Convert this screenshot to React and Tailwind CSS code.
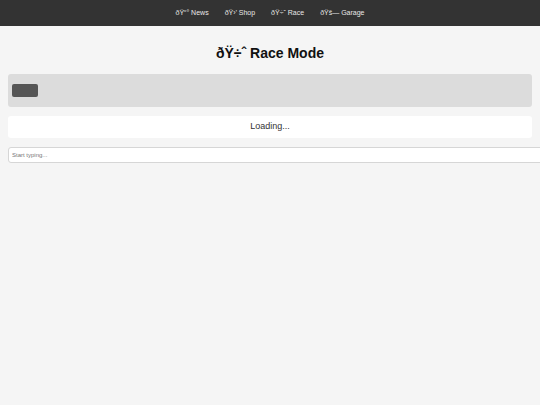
export default function App() {
  const links = ["ðŸ“° News", "ðŸ›’ Shop", "ðŸ÷ˆ Race", "ðŸš— Garage"];
  return (
    <div className="min-h-[405px] bg-[#f5f5f5] font-['Liberation_Sans',Arial,sans-serif]">
      <nav className="flex h-[26px] items-center justify-center gap-[16px] bg-[#333] text-[7px] text-[#e8e8e8]">
        {links.map((l) => (
          <span key={l}>{l}</span>
        ))}
      </nav>
      <div className="px-[8px]">
        <h2 className="mt-[19px] text-center text-[14px] font-bold leading-[16px] text-[#111]">
          ðŸ÷ˆ Race Mode
        </h2>
        <div className="mt-[13px] flex h-[33px] items-center rounded-[3px] bg-[#dcdcdc] px-[4px]">
          <div className="h-[13px] w-[26px] rounded-[2px] bg-[#555]" />
        </div>
        <div className="mt-[9px] flex h-[22px] items-center justify-center rounded-[3px] bg-white text-[9px] text-[#333]">
          Loading...
        </div>
        <input
          placeholder="Start typing..."
          className="mt-[9px] h-[16px] w-[540px] rounded-[3px] border border-[#d6d6d6] bg-white px-[3px] text-[6px] placeholder:text-[#777]"
        />
      </div>
    </div>
  );
}
